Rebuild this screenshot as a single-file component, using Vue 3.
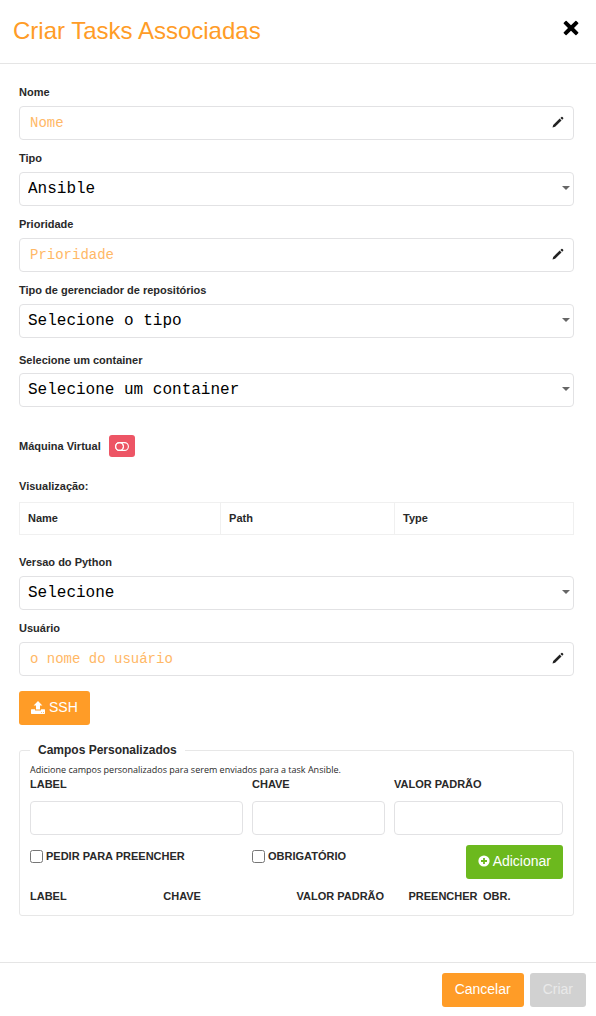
<script setup>
import { reactive } from 'vue'

const form = reactive({
  nome: '',
  tipo: 'Ansible',
  prioridade: '',
  gerenciador: 'Selecione o tipo',
  container: 'Selecione um container',
  python: 'Selecione',
  usuario: '',
  label: '',
  chave: '',
  valor: '',
  preencher: false,
  obrigatorio: false,
})

const topFields = [
  { key: 'nome', label: 'Nome', placeholder: 'Nome' },
  { key: 'tipo', label: 'Tipo', options: ['Ansible'] },
  { key: 'prioridade', label: 'Prioridade', placeholder: 'Prioridade' },
  { key: 'gerenciador', label: 'Tipo de gerenciador de repositórios', options: ['Selecione o tipo'] },
  { key: 'container', label: 'Selecione um container', options: ['Selecione um container'], spaced: true },
]

const userFields = [
  { key: 'python', label: 'Versao do Python', options: ['Selecione'] },
  { key: 'usuario', label: 'Usuário', placeholder: 'o nome do usuário' },
]

const groups = [topFields, userFields]
</script>

<template>
  <section class="modal" role="dialog" aria-labelledby="modal-title">
    <header class="modal-header">
      <h1 id="modal-title">Criar Tasks Associadas</h1>
      <button type="button" class="close" aria-label="Fechar">
        <svg viewBox="0 0 16 16" width="16" height="16" aria-hidden="true">
          <path d="M3.6 1L8 5.2L12.4 1Q12.9 0.6 13.4 1L15.2 2.8Q15.7 3.3 15.2 3.8L11 8L15.2 12.2Q15.7 12.7 15.2 13.2L13.4 15Q12.9 15.4 12.4 15L8 10.8L3.6 15Q3.1 15.4 2.6 15L0.8 13.2Q0.3 12.7 0.8 12.2L5 8L0.8 3.8Q0.3 3.3 0.8 2.8L2.6 1Q3.1 0.6 3.6 1Z" fill="#000" />
        </svg>
      </button>
    </header>

    <form class="modal-body" @submit.prevent>
      <template v-for="(group, index) in groups" :key="index">
        <div class="group">
          <div v-for="field in group" :key="field.key" class="field" :class="{ spaced: field.spaced }">
            <label :for="field.key">{{ field.label }}</label>
            <div class="control">
              <template v-if="field.options">
                <select :id="field.key" v-model="form[field.key]">
                  <option v-for="option in field.options" :key="option">{{ option }}</option>
                </select>
                <svg class="caret" viewBox="0 0 8 4" width="8" height="4" aria-hidden="true">
                  <path d="M0 0H8L4 4Z" fill="#666" />
                </svg>
              </template>
              <template v-else>
                <input :id="field.key" v-model="form[field.key]" type="text" :placeholder="field.placeholder" />
                <svg class="pencil" viewBox="0 0 12 12" width="12" height="12" aria-hidden="true">
                  <path d="M0.5 11.5L1.2 8.9L7.7 2.6L9.5 4.4L3.1 10.7Z" fill="#222" />
                  <path d="M8.4 1.9L9.4 1Q10 0.5 10.5 1L11.2 1.7Q11.6 2.2 11.2 2.7L10.2 3.7Z" fill="#222" />
                </svg>
              </template>
            </div>
          </div>
        </div>

        <template v-if="index === 0">
          <div class="vm">
            <span id="vm-label">Máquina Virtual</span>
            <button type="button" class="toggle" aria-labelledby="vm-label" aria-pressed="false">
              <svg viewBox="0 0 14 9" width="14" height="9" aria-hidden="true">
                <rect x="0.6" y="0.6" width="12.8" height="7.8" rx="3.9" fill="none" stroke="#fff" stroke-width="1.1" />
                <circle cx="4.5" cy="4.5" r="3.9" fill="none" stroke="#fff" stroke-width="1.1" />
                <path d="M6.6 0.8Q10.4 4.5 6.6 8.2" fill="none" stroke="#fff" />
              </svg>
            </button>
          </div>

          <table class="preview">
            <caption>Visualização:</caption>
            <thead>
              <tr>
                <th class="col-name" scope="col">Name</th>
                <th class="col-path" scope="col">Path</th>
                <th scope="col">Type</th>
              </tr>
            </thead>
          </table>
        </template>
      </template>

      <button type="button" class="btn orange ssh">
        <svg viewBox="0 0 14 13" width="14" height="13" aria-hidden="true">
          <path d="M7 0L11.4 4.6H9V8.6H5V4.6H2.6Z" fill="#fff" />
          <path d="M0.5 8.2H4.1V9.6H9.9V8.2H13.5Q14 8.2 14 8.8V12.3Q14 12.9 13.5 12.9H0.5Q0 12.9 0 12.3V8.8Q0 8.2 0.5 8.2Z" fill="#fff" />
          <path d="M10 11.5H11M12 11.5H13" stroke="#ffc27d" />
        </svg>
        SSH
      </button>

      <fieldset class="custom">
        <legend>Campos Personalizados</legend>
        <p class="help">Adicione campos personalizados para serem enviados para a task Ansible.</p>
        <div class="custom-grid">
          <div class="custom-field">
            <label for="c-label">LABEL</label>
            <input id="c-label" v-model="form.label" type="text" />
          </div>
          <div class="custom-field">
            <label for="c-chave">CHAVE</label>
            <input id="c-chave" v-model="form.chave" type="text" />
          </div>
          <div class="custom-field">
            <label for="c-valor">VALOR PADRÃO</label>
            <input id="c-valor" v-model="form.valor" type="text" />
          </div>
          <label class="check"><input v-model="form.preencher" type="checkbox" />PEDIR PARA PREENCHER</label>
          <label class="check"><input v-model="form.obrigatorio" type="checkbox" />OBRIGATÓRIO</label>
          <button type="button" class="btn green add">
            <svg viewBox="0 0 12 12" width="12" height="12" aria-hidden="true">
              <circle cx="6" cy="6" r="5.6" fill="#fff" />
              <path d="M6 3V9M3 6H9" stroke="#6cb91e" stroke-width="1.8" />
            </svg>
            Adicionar
          </button>
        </div>
        <table class="entries">
          <thead>
            <tr>
              <th class="quarter" scope="col">LABEL</th>
              <th class="quarter" scope="col">CHAVE</th>
              <th class="fifth" scope="col">VALOR PADRÃO</th>
              <th class="seventh" scope="col">PREENCHER</th>
              <th scope="col">OBR.</th>
            </tr>
          </thead>
        </table>
      </fieldset>
    </form>

    <footer class="modal-footer">
      <button type="button" class="btn orange">Cancelar</button>
      <button type="button" class="btn" disabled>Criar</button>
    </footer>
  </section>
</template>

<style>
body {
  margin: 0;
  background: #fff;
}
</style>

<style scoped>
.modal,
.modal * {
  box-sizing: border-box;
}

.modal {
  font: 700 11px/16px "Liberation Sans", Arial, sans-serif;
  color: #292929;
}

.modal-header {
  display: flex;
  justify-content: space-between;
  align-items: flex-start;
  padding: 16px 17px 17px 13px;
  border-bottom: 1px solid #e5e5e5;
}

h1 {
  margin: 0;
  font-size: 24px;
  line-height: 30px;
  font-weight: 400;
  color: #ff9c27;
}

button {
  border: 0;
  padding: 0;
  font-family: inherit;
  cursor: pointer;
}

svg {
  display: block;
  flex: none;
}

.close {
  margin-top: 4px;
  background: none;
}

.modal-body {
  padding: 20px 22px 46px 19px;
}

.group {
  display: flex;
  flex-direction: column;
  gap: 10px;
}

.field {
  display: flex;
  flex-direction: column;
  gap: 6px;
}

.field.spaced {
  padding-top: 4px;
  gap: 5px;
}

.control {
  position: relative;
}

.control input,
.control select,
.custom-field input {
  display: block;
  width: 100%;
  height: 34px;
  border: 1px solid #e2e2e4;
  border-radius: 4px;
  background: #fff;
  font-family: "Liberation Mono", "Courier New", monospace;
  color: #000;
  outline: 0;
}

.control input {
  padding: 0 32px 0 10px;
  font-size: 14px;
}

.control input::placeholder {
  color: #ffb866;
  opacity: 1;
}

.control select {
  appearance: none;
  padding: 0 20px 0 8px;
  font-size: 16px;
}

.caret {
  position: absolute;
  right: 4px;
  top: 14px;
  pointer-events: none;
}

.pencil {
  position: absolute;
  right: 10px;
  top: 10px;
  pointer-events: none;
}

.vm {
  display: flex;
  align-items: center;
  gap: 8px;
  margin: 28px 0 21px;
}

.toggle {
  display: flex;
  align-items: center;
  justify-content: center;
  width: 26px;
  height: 22px;
  border-radius: 3px;
  background: #ed5565;
}

table {
  width: 100%;
  border-collapse: collapse;
  table-layout: fixed;
}

caption {
  padding-bottom: 8px;
  text-align: left;
}

th {
  text-align: left;
}

.preview {
  margin-bottom: 19px;
}

.preview th {
  height: 32px;
  padding: 0 8px 1px;
  border: 1px solid #f0f0f0;
}

.col-name {
  width: 36.3%;
}

.col-path {
  width: 31.4%;
}

.btn {
  height: 34px;
  padding: 0 13px 2px;
  border-radius: 3px;
  font-size: 14px;
  color: #fff;
}

.orange {
  background: #ff9c27;
}

.green {
  background: #6cb91e;
}

.btn:disabled {
  background: #d1d1d1;
  color: #e9e9e9;
}

.ssh {
  display: flex;
  align-items: center;
  gap: 4px;
  margin: 15px 0 17px;
  padding: 0 12px 2px;
}

.custom {
  min-width: 0;
  margin: 0;
  padding: 5px 10px 11px;
  border: 1px solid #e7e7e7;
  border-radius: 3px;
}

legend {
  padding: 0 8px;
  font-size: 12px;
}

.help {
  margin: 0;
  font-family: "Open Sans", sans-serif;
  font-size: 9px;
  line-height: 13px;
  font-weight: 400;
}

.custom-grid {
  display: grid;
  grid-template-columns: 213fr 133fr 169fr;
  gap: 10px 9px;
}

.custom-field {
  display: flex;
  flex-direction: column;
  gap: 9px;
}

.custom-field input {
  padding: 0 8px;
  font-size: 14px;
}

.check {
  display: flex;
  align-items: center;
  gap: 3px;
  height: 22px;
}

.check input {
  width: 13px;
  height: 13px;
  margin: 0;
}

.add {
  display: flex;
  align-items: center;
  gap: 3px;
  justify-self: end;
  padding: 0 12px 2px;
}

.entries {
  margin-top: 9px;
}

.entries th {
  padding: 0;
}

.quarter {
  width: 25%;
}

.fifth {
  width: 21%;
}

.seventh {
  width: 14%;
}

.modal-footer {
  display: flex;
  justify-content: flex-end;
  gap: 6px;
  padding: 10px 10px 9px;
  border-top: 1px solid #e5e5e5;
}
</style>
